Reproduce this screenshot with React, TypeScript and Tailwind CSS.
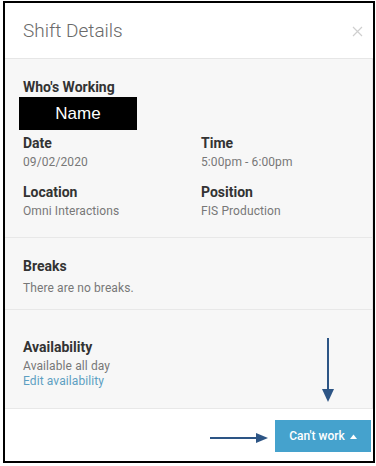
const Field = ({ label, value }: { label: string; value: string }) => (
  <div>
    <p className="text-[14px] leading-[16px] font-bold text-[#333]">{label}</p>
    <p className="mt-[3px] text-[12px] leading-[16px] text-[#777] tracking-[0.1px]">{value}</p>
  </div>
);

const App = () => {
  return (
    <div className="w-[376px] h-[466px] bg-white pl-[3px] pt-[1px] font-['Roboto',sans-serif]">
      <div className="relative w-[372px] h-[462px] border-2 border-black flex flex-col">
        {/* header */}
        <div className="h-[56px] flex items-center justify-between pl-[18px] pr-[10px] border-b border-[#e6e6e6] bg-white">
          <h1 className="text-[19px] leading-[22px] font-light text-[#6a6a6a]">Shift Details</h1>
          <svg width="11" height="11" viewBox="0 0 11 11" className="mt-[1px]">
            <path d="M1 1L10 10M10 1L1 10" stroke="#cfcfcf" strokeWidth="1.2" />
          </svg>
        </div>

        {/* who / date / location */}
        <div className="h-[179px] bg-[#f7f7f7] border-b border-[#e8e8e8] pl-[18px] pt-[20px] border-r border-r-[#e4e4e4]">
          <p className="text-[14px] leading-[16px] font-bold text-[#333]">Who's Working</p>
          <div className="mt-[2px] -ml-[4px] w-[118px] h-[33px] bg-black flex items-center justify-center">
            <span className="text-[17px] text-white font-['Liberation_Sans',Arial,sans-serif]">Name</span>
          </div>
          <div className="mt-[5px] grid grid-cols-[178px_1fr] gap-y-[14px]">
            <Field label="Date" value="09/02/2020" />
            <Field label="Time" value="5:00pm - 6:00pm" />
            <Field label="Location" value="Omni Interactions" />
            <Field label="Position" value="FIS Production" />
          </div>
        </div>

        {/* breaks */}
        <div className="h-[72px] bg-[#f7f7f7] border-b border-[#e8e8e8] pl-[18px] pt-[20px] border-r border-r-[#e4e4e4]">
          <p className="text-[14px] leading-[16px] font-bold text-[#333]">Breaks</p>
          <p className="mt-[6px] text-[12px] leading-[16px] text-[#777] tracking-[0.1px]">There are no breaks.</p>
        </div>

        {/* availability */}
        <div className="h-[99px] bg-[#f7f7f7] border-b border-[#e8e8e8] pl-[18px] pt-[29px] border-r border-r-[#e4e4e4]">
          <p className="text-[14px] leading-[16px] font-bold text-[#333]">Availability</p>
          <p className="mt-[4px] text-[12px] leading-[15px] text-[#777] tracking-[0.1px]">Available all day</p>
          <p className="text-[12px] leading-[15px] text-[#5d9fc2] tracking-[0.1px]">Edit availability</p>
        </div>

        {/* footer */}
        <div className="flex-1 bg-white flex justify-end items-start pt-[11px] pr-[2px]">
          <button className="w-[96px] h-[32px] bg-[#45a2cd] text-white text-[12px] font-medium flex items-center justify-center gap-[5px]">
            Can't work
            <svg width="7" height="5" viewBox="0 0 7 5">
              <path d="M0 5L3.5 0.5L7 5Z" fill="white" />
            </svg>
          </button>
        </div>

        {/* annotation arrows */}
        <svg className="absolute left-[312px] top-[334px]" width="22" height="68" viewBox="0 0 22 68">
          <path d="M11 1V56" stroke="#2d5585" strokeWidth="2" />
          <path d="M5 52L17 52L11 65Z" fill="#2d5585" />
        </svg>
        <svg className="absolute left-[202px] top-[428px]" width="64" height="14" viewBox="0 0 64 14">
          <path d="M3 7H52" stroke="#2d5585" strokeWidth="2" />
          <path d="M49 2L49 12L61 7Z" fill="#2d5585" />
        </svg>
      </div>
    </div>
  );
};

export default App;
